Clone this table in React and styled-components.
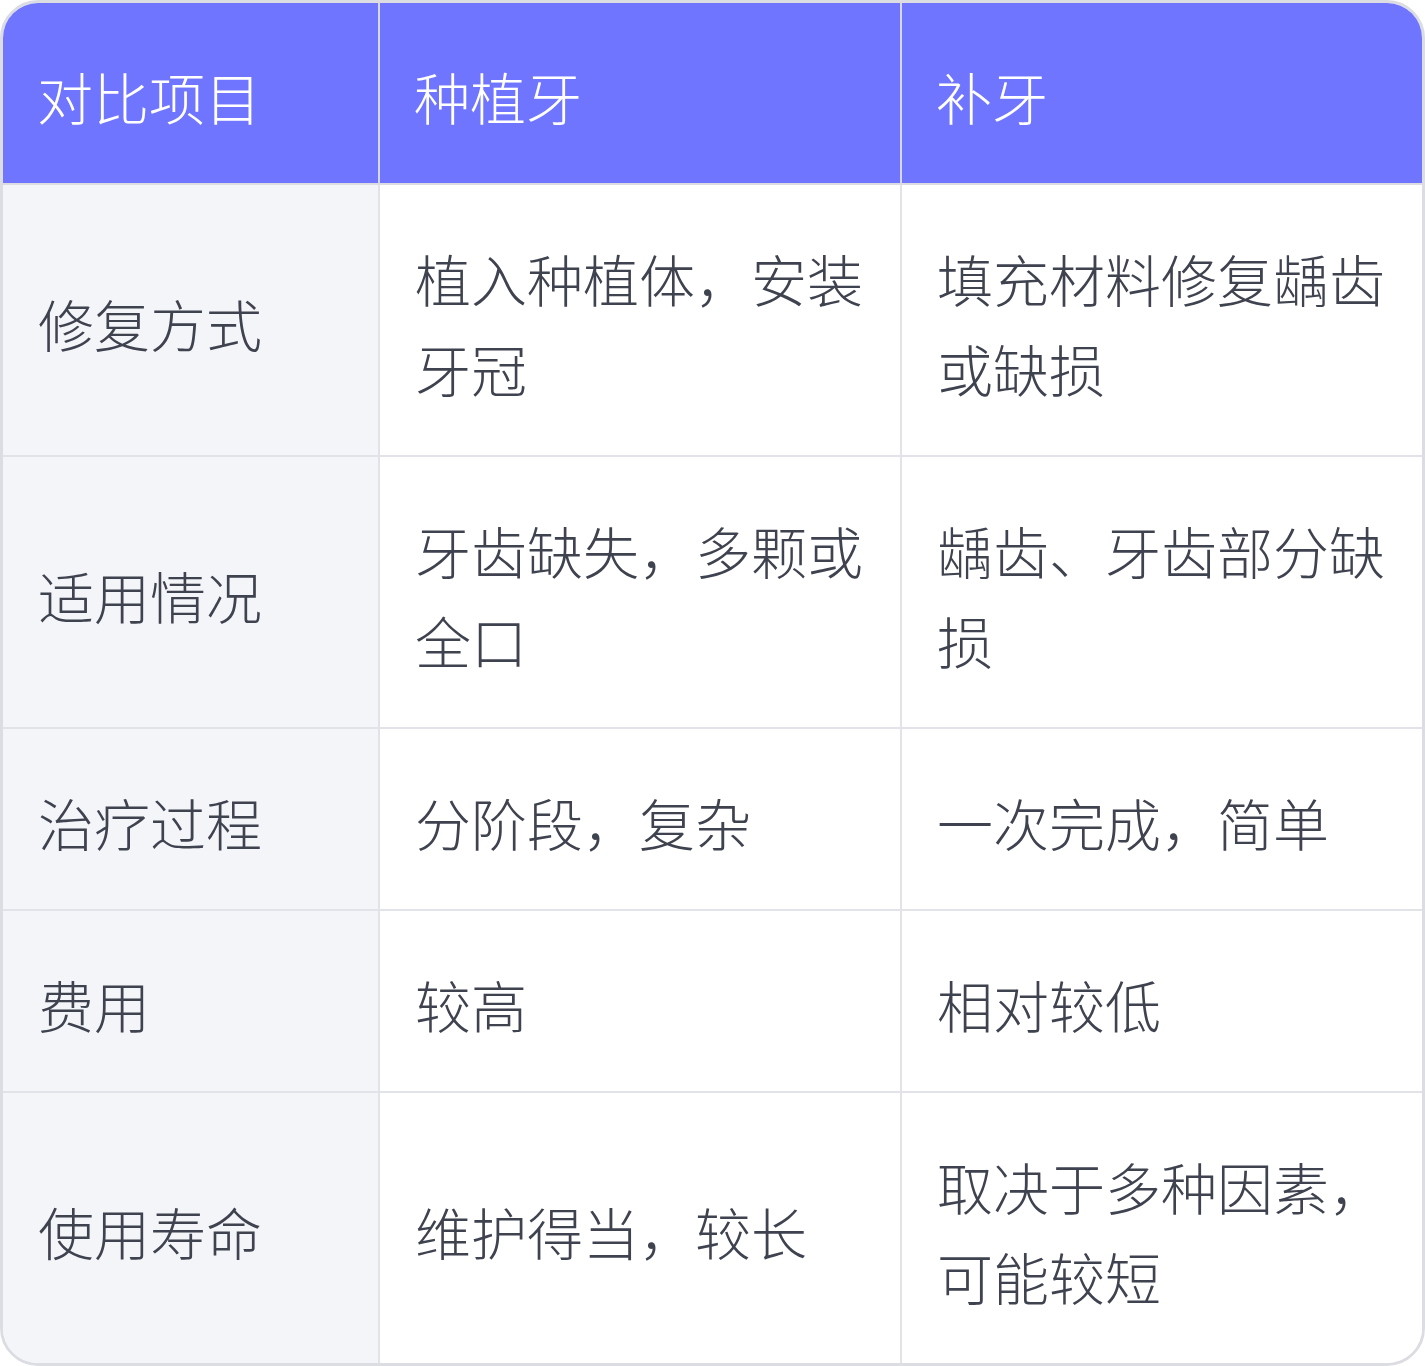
import React from 'react';
import styled, { createGlobalStyle } from 'styled-components';

const GlobalStyle = createGlobalStyle`
  html, body {
    margin: 0;
    padding: 0;
    background: #ffffff;
  }
  * {
    box-sizing: border-box;
  }
`;

const Wrapper = styled.div`
  width: 1425px;
  border: 3px solid #dcdde2;
  border-radius: 38px;
  overflow: hidden;
  background: #ffffff;
`;

const Table = styled.table`
  width: 100%;
  border-collapse: separate;
  border-spacing: 0;
  table-layout: fixed;
  font-family: "Noto Sans CJK SC", "Noto Sans", sans-serif;
  font-size: 56px;
  font-weight: 300;
  line-height: 90px;
  color: #3f424f;
`;

const HeadCell = styled.th`
  background: #6f75ff;
  color: #ffffff;
  font-weight: 300;
  text-align: left;
  height: 182px;
  padding: 6px 34px 0;
  border-bottom: 2px solid #dcdde2;
  border-right: ${(p) => (p.$last ? 'none' : '2px solid #d6d8f0')};
  vertical-align: middle;
`;

const Cell = styled.td`
  background: ${(p) => (p.$label ? '#f4f5f9' : '#ffffff')};
  padding: 48px 34px 42px 35px;
  vertical-align: middle;
  border-bottom: ${(p) => (p.$lastRow ? 'none' : '2px solid #e2e3e8')};
  border-right: ${(p) => (p.$last ? 'none' : '2px solid #e2e3e8')};
  word-break: break-all;
`;

const rows = [
  ['修复方式', '植入种植体，安装牙冠', '填充材料修复龋齿或缺损'],
  ['适用情况', '牙齿缺失，多颗或全口', '龋齿、牙齿部分缺损'],
  ['治疗过程', '分阶段，复杂', '一次完成，简单'],
  ['费用', '较高', '相对较低'],
  ['使用寿命', '维护得当，较长', '取决于多种因素，可能较短'],
];

export default function App() {
  return (
    <>
      <GlobalStyle />
      <Wrapper>
        <Table>
          <colgroup>
            <col style={{ width: 377 }} />
            <col style={{ width: 522 }} />
            <col style={{ width: 520 }} />
          </colgroup>
          <thead>
            <tr>
              <HeadCell>对比项目</HeadCell>
              <HeadCell>种植牙</HeadCell>
              <HeadCell $last>补牙</HeadCell>
            </tr>
          </thead>
          <tbody>
            {rows.map((row, i) => (
              <tr key={row[0]}>
                {row.map((text, j) => (
                  <Cell
                    key={j}
                    $label={j === 0}
                    $last={j === 2}
                    $lastRow={i === rows.length - 1}
                  >
                    {text}
                  </Cell>
                ))}
              </tr>
            ))}
          </tbody>
        </Table>
      </Wrapper>
    </>
  );
}
